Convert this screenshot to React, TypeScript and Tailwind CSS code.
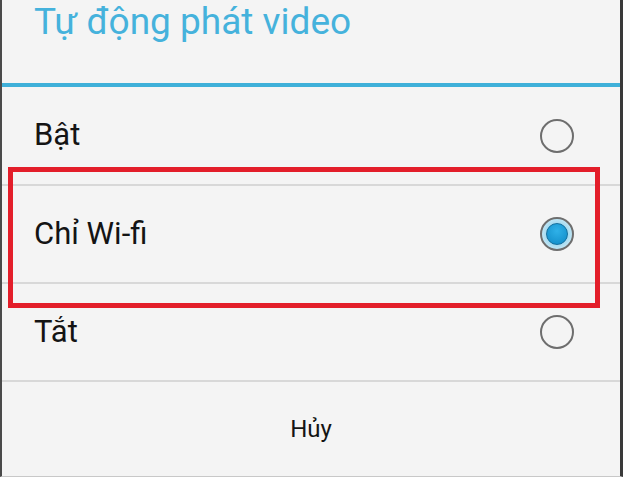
import React, { useState } from 'react';

type Option = { label: string; height: string };

const options: Option[] = [
  { label: 'Bật', height: 'h-[97px]' },
  { label: 'Chỉ Wi-fi', height: 'h-[96px]' },
  { label: 'Tắt', height: 'h-[96px]' },
];

function Radio({ checked }: { checked: boolean }) {
  if (!checked) {
    return <div className="w-[34px] h-[34px] rounded-full border-2 border-[#6e6e6e]" />;
  }
  return (
    <div className="w-[34px] h-[34px] rounded-full border-2 border-[#6e6e6e] bg-[radial-gradient(circle,#9fd8ef_45%,#e3f4fb_100%)] flex items-center justify-center">
      <div className="w-[22px] h-[22px] rounded-full bg-[radial-gradient(circle_at_50%_35%,#2fb1e8,#0f8ac6)] border border-[#136f9e]" />
    </div>
  );
}

export default function App() {
  const [selected, setSelected] = useState(1);

  return (
    <div
      className="relative w-[623px] h-[477px] bg-[#f4f4f4] border-l-2 border-l-[#4a4a4a] border-r-[3px] border-r-[#3a3a3a] border-b border-b-[#c8c8c8] flex flex-col overflow-hidden"
      style={{ fontFamily: 'Roboto, "Noto Sans", sans-serif' }}
    >
      {/* Title */}
      <div className="h-[83px] pl-[32px]">
        <h1 className="text-[37px] leading-[44px] text-[#45b2dc]">Tự động phát video</h1>
      </div>
      <div className="h-[4px] bg-[#3fb0d9]" />

      {/* Options */}
      {options.map((opt, i) => (
        <React.Fragment key={opt.label}>
          <button
            onClick={() => setSelected(i)}
            className={`${opt.height} flex items-center justify-between pl-[32px] pr-[46px] text-left`}
          >
            <span className="text-[31px] text-[#141414]">{opt.label}</span>
            <Radio checked={selected === i} />
          </button>
          <div className="h-[2px] bg-[#d8d8d8]" />
        </React.Fragment>
      ))}

      {/* Cancel */}
      <button className="flex-1 flex items-center justify-center">
        <span className="text-[24px] text-[#141414]">Hủy</span>
      </button>

      {/* Highlight box */}
      <div className="absolute left-[6px] top-[167px] w-[592px] h-[141px] border-[5px] border-[#e31e2a] pointer-events-none" />
    </div>
  );
}
